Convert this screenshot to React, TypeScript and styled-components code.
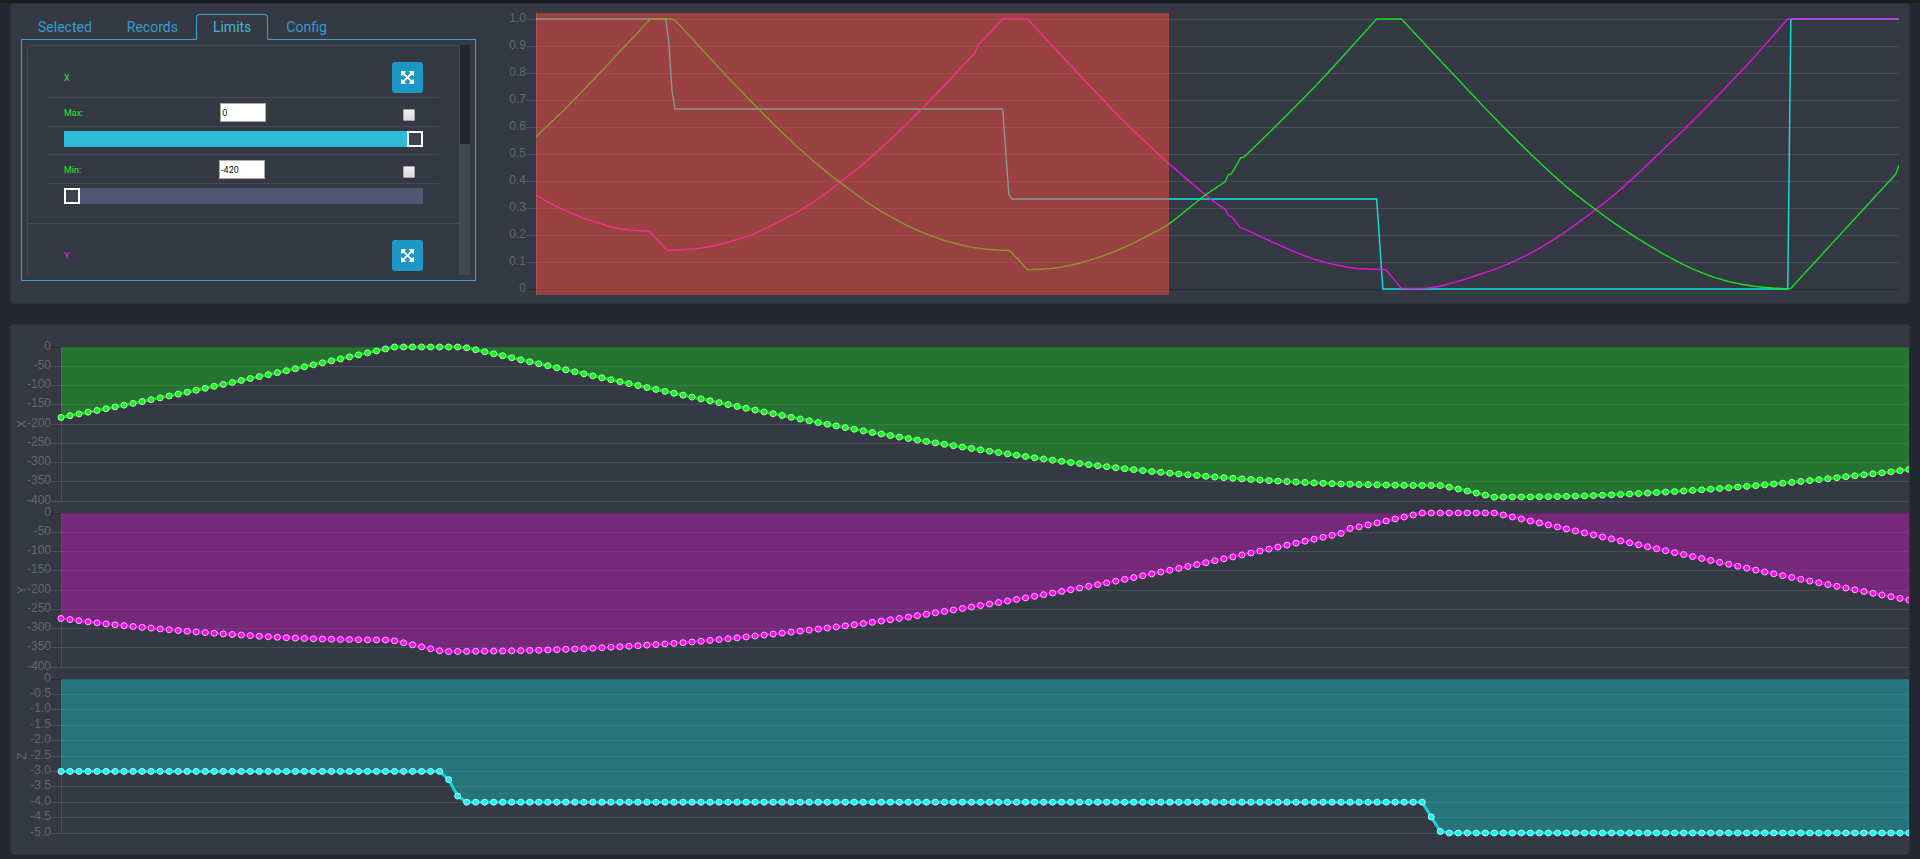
import React, { useLayoutEffect, useRef, useState } from 'react';
import styled, { createGlobalStyle } from 'styled-components';

const GlobalStyle = createGlobalStyle`
  *, *::before, *::after { box-sizing: border-box; }
  body {
    margin: 0;
    background: #24272f;
    color: #666;
    font-family: Roboto, "Liberation Sans", sans-serif;
  }
`;

/* ---------- recorded axis data ---------- */

type Key = [index: number, value: number];
type Curve = Key[][];

const LAST = 441;
const WINDOW_END = 205;

// Each inner list is one smooth stretch; stretches meet at a corner.
const X_CURVE: Curve = [
  [[0, -183], [10, -137], [20, -87], [30, -36], [36, -5], [37, 0]],
  [[37, 0], [44, 0]],
  [[44, 0], [45, -2]],
  [[45, -2], [50, -28], [55, -54], [60, -80], [70, -130], [80, -178], [90, -222], [100, -260], [110, -294],
    [120, -321], [130, -341], [140, -354], [148, -359], [153, -360]],
  [[153, -360], [154, -364], [159, -390]],
  [[159, -390], [164, -389], [170, -386], [180, -374], [190, -356], [200, -332], [205, -318], [216, -276], [223, -253]],
  [[223, -253], [224, -242]],
  [[224, -242], [225, -241]],
  [[225, -241], [228, -216]],
  [[228, -216], [229, -215]],
  [[229, -215], [242, -154], [254, -95], [272, 0]],
  [[272, 0], [280, 0]],
  [[280, 0], [296, -82], [313, -168], [331, -251], [343, -297], [355, -337], [370, -379], [382, -403], [393, -415], [405, -420]],
  [[405, -420], [406, -419]],
  [[406, -419], [440, -241]],
  [[440, -241], [441, -227]],
];

const Y_CURVE: Curve = [
  [[0, -274], [5, -288], [10, -299], [15, -309], [20, -317], [25, -324], [30, -328], [36, -330]],
  [[36, -330], [37, -332]],
  [[37, -332], [42, -358]],
  [[42, -358], [43, -360]],
  [[43, -360], [50, -358], [55, -355], [60, -350], [70, -335], [80, -312], [90, -284], [100, -248], [110, -208],
    [120, -163], [130, -114], [140, -63], [142, -53]],
  [[142, -53], [143, -40]],
  [[143, -40], [144, -36], [151, 0]],
  [[151, 0], [159, 0]],
  [[159, 0], [165, -31], [170, -57], [180, -108], [190, -158], [200, -204], [205, -226], [218, -279], [223, -296]],
  [[223, -296], [224, -306]],
  [[224, -306], [225, -307]],
  [[225, -307], [228, -325]],
  [[228, -325], [229, -326]],
  [[229, -326], [242, -355], [252, -374], [264, -387], [275, -390]],
  [[275, -390], [280, -419]],
  [[280, -419], [287, -419], [293, -415], [303, -401], [315, -380], [328, -347], [343, -296], [353, -256], [372, -169],
    [390, -81], [405, 0]],
  [[405, 0], [LAST, 0]],
];

const Z_CURVE: Curve = [
  [[0, -3], [42, -3]],
  [[42, -3], [43, -3.27]],
  [[43, -3.27], [44, -3.8]],
  [[44, -3.8], [45, -4]],
  [[45, -4], [151, -4]],
  [[151, -4], [152, -4.48]],
  [[152, -4.48], [153, -4.95]],
  [[153, -4.95], [154, -5]],
  [[154, -5], [272, -5]],
  [[272, -5], [274, -6]],
  [[274, -6], [405, -6]],
  [[405, -6], [406, -3]],
  [[406, -3], [LAST, -3]],
];

function slopeAt(keys: Key[], i: number): number {
  const a = keys[Math.max(0, i - 1)];
  const b = keys[Math.min(keys.length - 1, i + 1)];
  return (b[1] - a[1]) / (b[0] - a[0]);
}

function valueAt(curve: Curve, index: number): number {
  const keys = curve.find((part) => index <= part[part.length - 1][0]) ?? curve[curve.length - 1];
  const i = Math.max(0, keys.findIndex((key) => index <= key[0]) - 1);
  const [x0, y0] = keys[i];
  const [x1, y1] = keys[i + 1];
  const h = x1 - x0;
  const t = (index - x0) / h;
  const t2 = t * t;
  const t3 = t2 * t;
  return (
    (2 * t3 - 3 * t2 + 1) * y0 +
    (t3 - 2 * t2 + t) * h * slopeAt(keys, i) +
    (3 * t2 - 2 * t3) * y1 +
    (t3 - t2) * h * slopeAt(keys, i + 1)
  );
}

const sampleCurve = (curve: Curve) => Array.from({ length: LAST + 1 }, (_, i) => valueAt(curve, i));

interface Axis {
  name: string;
  min: number;
  max: number;
  values: number[];
  ticks: string[];
  text: string;
  line: string;
  fill: string;
  halo: string;
}

const hundreds = ['0', '-50', '-100', '-150', '-200', '-250', '-300', '-350', '-400'];
const halves = ['0', '-0.5', '-1.0', '-1.5', '-2.0', '-2.5', '-3.0', '-3.5', '-4.0', '-4.5', '-5.0'];

const AXES: Axis[] = [
  { name: 'X', min: -420, max: 0, values: sampleCurve(X_CURVE), ticks: hundreds,
    text: '#22ee2e', line: '#12f51a', fill: 'rgba(14, 205, 22, 0.4)', halo: '#b4f7b8' },
  { name: 'Y', min: -420, max: 0, values: sampleCurve(Y_CURVE), ticks: hundreds,
    text: '#e820e2', line: '#f50ff0', fill: 'rgba(214, 16, 210, 0.4)', halo: '#f9b8f6' },
  { name: 'Z', min: -6, max: -3, values: sampleCurve(Z_CURVE), ticks: halves,
    text: '#20e8f0', line: '#10f5f5', fill: 'rgba(16, 208, 208, 0.4)', halo: '#b8f8f8' },
];

/* ---------- page ---------- */

const Page = styled.main`
  display: flex;
  flex-direction: column;
  gap: 20px;
  padding: 0 10px 4px;
  border-top: 3px solid #1b1c22;
`;

const Panel = styled.section`
  display: flex;
  gap: 20px;
  background: #353944;
  border: 1px solid #2f323c;
  border-radius: 4px;
`;

const TopPanel = styled(Panel)`
  padding: 0 10px;
`;

const Controls = styled.div`
  flex: none;
  width: 455px;
  padding: 10px 0 22px;
`;

/* ---------- tabs ---------- */

const TabList = styled.div`
  display: flex;
  gap: 1px;
  margin-bottom: -1px;
`;

const Tab = styled.button<{ $active: boolean }>`
  position: relative;
  height: 26px;
  padding: 0 16px;
  font: 14px/24px Roboto, sans-serif;
  color: ${(p) => (p.$active ? '#41b4d8' : '#379bd0')};
  background: ${(p) => (p.$active ? '#353944' : 'transparent')};
  border: 1px solid ${(p) => (p.$active ? '#38a6c8' : 'transparent')};
  border-bottom-color: ${(p) => (p.$active ? '#353944' : '#38a6c8')};
  border-radius: 4px 4px 0 0;
  cursor: pointer;
`;

const TabBox = styled.div`
  height: 242px;
  padding: 5px;
  border: 1px solid #38a6c8;
`;

const ScrollFrame = styled.div`
  display: flex;
  height: 230px;
`;

const ScrollArea = styled.div`
  flex: 1;
  overflow-y: auto;
  scrollbar-width: none;
`;

const ScrollTrack = styled.div`
  width: 10px;
  background: #434653;
`;

const ScrollThumb = styled.div`
  background: #23252f;
`;

/* ---------- limits form ---------- */

const LimitGroup = styled.fieldset`
  margin: 0;
  padding: 16px 20px 19px;
  border: 1px solid #444857;
  border-bottom-width: 0;

  &:first-child {
    border-radius: 4px 4px 0 0;
  }
`;

const Row = styled.div`
  display: flex;
  align-items: center;
  justify-content: space-between;
  height: 29px;
  padding: 1px 16px 0;
  border-bottom: 1px solid #444857;
`;

const HeadRow = styled(Row)`
  height: 36px;
  padding: 0 16px 4px;
`;

const SliderRow = styled.div<{ $last?: boolean }>`
  display: flex;
  padding: ${(p) => (p.$last ? '4px 16px 0' : '4px 16px 7px')};
  border-bottom: ${(p) => (p.$last ? '0' : '1px solid #444857')};
`;

const AxisName = styled.span<{ $color: string }>`
  font-size: 9px;
  line-height: 12px;
  color: ${(p) => p.$color};
`;

const FieldLabel = styled.label<{ $color: string }>`
  font-size: 9px;
  line-height: 12px;
  color: ${(p) => p.$color};
`;

const FitButton = styled.button`
  display: flex;
  align-items: center;
  justify-content: center;
  width: 31px;
  height: 31px;
  padding: 0;
  color: #fff;
  background: #1c97c6;
  border: 0;
  border-radius: 3px;
  cursor: pointer;
`;

const NumberBox = styled.input`
  width: 46px;
  height: 19px;
  padding: 0 1px;
  font: 9px/12px Roboto, sans-serif;
  color: #111;
  background: #fff;
  border: 1px solid #a9a9a9;
`;

const Check = styled.input`
  appearance: none;
  width: 12px;
  height: 12px;
  margin: 5px 8px 0 0;
  background: linear-gradient(#f0f0f0, #d9d9d9);
  border: 1px solid #a6a6a6;
  border-radius: 1px;

  &:checked {
    background: #1c97c6;
  }
`;

const Slider = styled.input`
  appearance: none;
  flex: 1;
  min-width: 0;
  height: 16px;
  margin: 0;
  background: #4e5873;

  &::-webkit-slider-thumb {
    appearance: none;
    width: 16px;
    height: 16px;
    background: #3f4350;
    border: 2px solid #fff;
  }
`;

function ArrowsIcon() {
  return (
    <svg width="13" height="13" viewBox="0 -128 1536 1536" fill="currentColor" aria-hidden="true">
      <path d="M1283 995l-355 -355l355 -355l144 144q29 31 70 14q39 -17 39 -59v-448q0 -26 -19 -45t-45 -19h-448q-42 0 -59 40q-17 39 14 69l144 144l-355 355l-355 -355l144 -144q31 -30 14 -69q-17 -40 -59 -40h-448q-26 0 -45 19t-19 45v448q0 42 40 59q39 17 69 -14l144 -144l355 355l-355 355l-144 -144q-19 -19 -45 -19q-12 0 -24 5q-40 17 -40 59v448q0 26 19 45t45 19h448q42 0 59 -40q17 -39 -14 -69l-144 -144l355 -355l355 355l-144 144q-31 30 -14 69q17 40 59 40h448q26 0 45 -19t19 -45v-448q0 -42 -39 -59q-13 -5 -25 -5q-26 0 -45 19z" />
    </svg>
  );
}

function LimitRows({ axis, bound, last }: { axis: Axis; bound: 'Max' | 'Min'; last?: boolean }) {
  const [value, setValue] = useState(String(bound === 'Max' ? axis.max : axis.min));
  const id = `${axis.name}-${bound}`;
  const filled = ((Number(value) - axis.min) / (axis.max - axis.min)) * 100;
  return (
    <>
      <Row>
        <FieldLabel htmlFor={id} $color={axis.text}>{bound}:</FieldLabel>
        <NumberBox id={id} value={value} onChange={(e) => setValue(e.target.value)} />
        <Check type="checkbox" aria-label={`Lock ${axis.name} ${bound}`} />
      </Row>
      <SliderRow $last={last}>
        <Slider
          type="range"
          aria-label={`${axis.name} ${bound}`}
          min={axis.min}
          max={axis.max}
          value={Number(value) || 0}
          onChange={(e) => setValue(e.target.value)}
          style={{ backgroundImage: `linear-gradient(to right, #2fbcda ${filled}%, #4e5873 ${filled}%)` }}
        />
      </SliderRow>
    </>
  );
}

function LimitsForm() {
  const areaRef = useRef<HTMLDivElement>(null);
  const [thumb, setThumb] = useState({ top: 0, size: 0 });

  const update = () => {
    const el = areaRef.current;
    if (!el) return;
    const ratio = el.clientHeight / el.scrollHeight;
    setThumb({ top: el.scrollTop * ratio, size: el.clientHeight * ratio });
  };
  useLayoutEffect(update, []);

  return (
    <ScrollFrame>
      <ScrollArea ref={areaRef} onScroll={update}>
        {AXES.map((axis) => (
          <LimitGroup key={axis.name} aria-label={`${axis.name} limits`}>
            <HeadRow>
              <AxisName $color={axis.text}>{axis.name}</AxisName>
              <FitButton type="button" aria-label={`Fit ${axis.name}`}>
                <ArrowsIcon />
              </FitButton>
            </HeadRow>
            <LimitRows axis={axis} bound="Max" />
            <LimitRows axis={axis} bound="Min" last />
          </LimitGroup>
        ))}
      </ScrollArea>
      <ScrollTrack>
        <ScrollThumb style={{ height: thumb.size, transform: `translateY(${thumb.top}px)` }} />
      </ScrollTrack>
    </ScrollFrame>
  );
}

/* ---------- charts ---------- */

const ChartBox = styled.div`
  flex: 1;
  min-width: 0;
  overflow: hidden;
`;

const ChartSvg = styled.svg`
  display: block;
  width: 100%;
`;

const TickText = styled.text`
  font: 12px "Liberation Sans", Arial, sans-serif;
  fill: #666;
  text-anchor: end;
`;

const AxisTitle = styled.text`
  font: 12px "Liberation Sans", Arial, sans-serif;
  fill: #666;
  text-anchor: middle;
`;

const GRID = 'rgba(255, 255, 255, 0.1)';
const ZERO = 'rgba(0, 0, 0, 0.25)';

function useWidth() {
  const ref = useRef<HTMLDivElement>(null);
  const [width, setWidth] = useState(0);
  useLayoutEffect(() => {
    const el = ref.current!;
    const measure = () => setWidth(el.clientWidth);
    measure();
    const observer = new ResizeObserver(measure);
    observer.observe(el);
    return () => observer.disconnect();
  }, []);
  return [ref, width] as const;
}

interface GridProps {
  labels: string[];
  zero: string;
  left: number;
  right: number;
  top: number;
  step: number;
}

function Grid({ labels, zero, left, right, top, step }: GridProps) {
  return (
    <g>
      {labels.map((label, i) => {
        const y = Math.floor(top + i * step);
        return (
          <g key={label}>
            <line x1={left - 10} x2={right} y1={y + 0.5} y2={y + 0.5} stroke={label === zero ? ZERO : GRID} />
            <TickText x={left - 10} y={y + 3}>{label}</TickText>
          </g>
        );
      })}
    </g>
  );
}

const OVERVIEW = { left: 40, top: 15, height: 270 };
const OVERVIEW_TICKS = ['1.0', '0.9', '0.8', '0.7', '0.6', '0.5', '0.4', '0.3', '0.2', '0.1', '0'];

function OverviewChart() {
  const [ref, width] = useWidth();
  const { left, top, height } = OVERVIEW;
  const step = (width - left) / LAST;
  const pathOf = (axis: Axis) =>
    axis.values
      .map((v, i) => {
        const y = top + (1 - (v - axis.min) / (axis.max - axis.min)) * height;
        return `${(left + i * step).toFixed(2)},${y.toFixed(2)}`;
      })
      .join(' ');
  return (
    <ChartBox ref={ref}>
      <ChartSvg height={299} role="img" aria-label="Overview">
        <Grid labels={OVERVIEW_TICKS} zero="0" left={left} right={width} top={top} step={27} />
        {[...AXES].reverse().map((axis) => (
          <polyline key={axis.name} points={pathOf(axis)} fill="none" stroke={axis.line} strokeWidth={1.4}
            strokeOpacity={0.9} />
        ))}
        <rect x={left} y={9} width={Math.max(0, Math.floor(WINDOW_END * step))} height={282}
          fill="rgba(255, 76, 64, 0.5)" />
        <line x1={left + 0.5} x2={left + 0.5} y1={9} y2={291} stroke={GRID} />
      </ChartSvg>
    </ChartBox>
  );
}

const DETAIL = { left: 50, top: 22, height: 154, pitch: 166 };

function DetailCharts() {
  const [ref, width] = useWidth();
  const { left, height, pitch } = DETAIL;
  const step = (width - left) / WINDOW_END;
  return (
    <ChartBox ref={ref}>
      <ChartSvg height={529} role="img" aria-label="Selected window">
        {AXES.map((axis, n) => {
          const top = DETAIL.top + n * pitch;
          const range = axis.name === 'Z' ? 5 : 400;
          const points = axis.values
            .slice(0, WINDOW_END + 1)
            .map((v, i) => [left + i * step, top + (-v / range) * height]);
          const line = points.map((p) => p.join(',')).join(' ');
          const middle = top + height / 2;
          return (
            <g key={axis.name}>
              <Grid labels={axis.ticks} zero="0" left={left} right={width} top={top}
                step={(height + 0.2) / (axis.ticks.length - 1)} />
              <line x1={left + 0.5} x2={left + 0.5} y1={top} y2={top + height} stroke={GRID} />
              <AxisTitle transform={`translate(15 ${middle}) rotate(-90)`}>{axis.name}</AxisTitle>
              <polygon points={`${left},${top} ${line} ${width},${top}`} fill={axis.fill} />
              <polyline points={line} fill="none" stroke={axis.line} strokeWidth={3} strokeOpacity={0.8} />
              {points.map(([x, y], i) => (
                <circle key={i} cx={x} cy={y} r={3} fill={axis.line} stroke={axis.halo} />
              ))}
            </g>
          );
        })}
      </ChartSvg>
    </ChartBox>
  );
}

const TABS = ['Selected', 'Records', 'Limits', 'Config'];

export default function App() {
  const [tab, setTab] = useState('Limits');
  return (
    <>
      <GlobalStyle />
      <Page>
        <TopPanel>
          <Controls>
            <TabList role="tablist">
              {TABS.map((name) => (
                <Tab key={name} type="button" role="tab" aria-selected={tab === name} $active={tab === name}
                  onClick={() => setTab(name)}>
                  {name}
                </Tab>
              ))}
            </TabList>
            <TabBox role="tabpanel" aria-label={tab}>{tab === 'Limits' && <LimitsForm />}</TabBox>
          </Controls>
          <OverviewChart />
        </TopPanel>
        <Panel>
          <DetailCharts />
        </Panel>
      </Page>
    </>
  );
}
